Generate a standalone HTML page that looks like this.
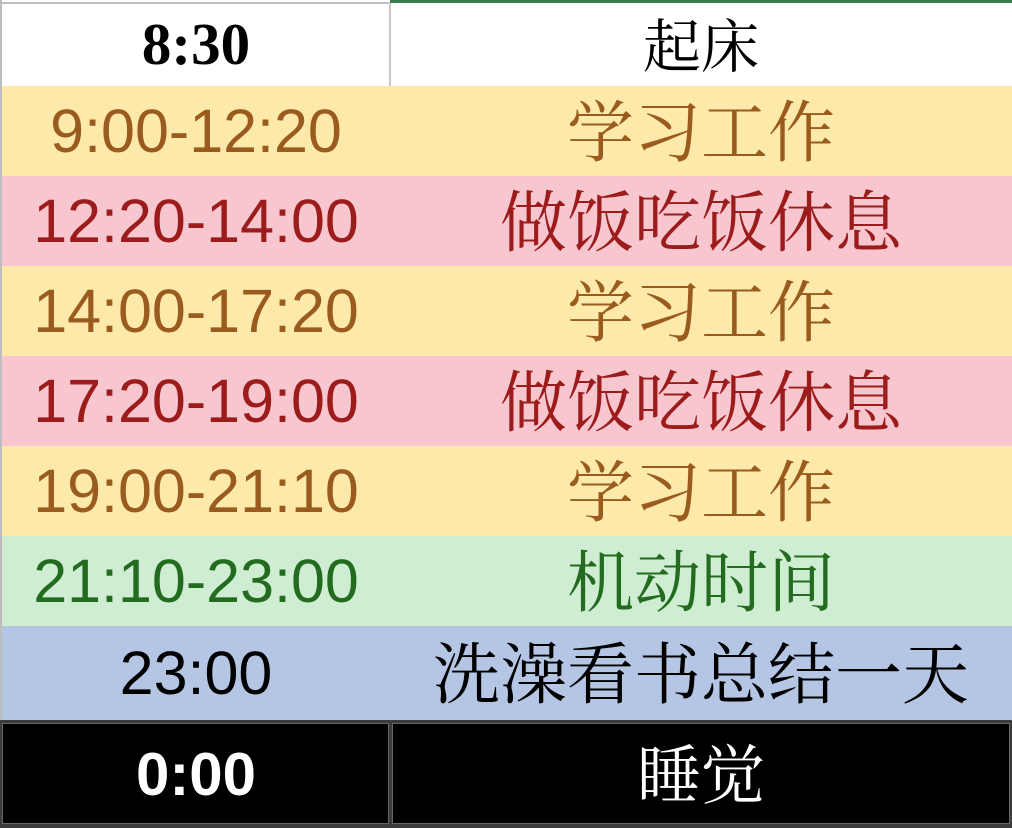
<!DOCTYPE html>
<html><head><meta charset="utf-8"><style>
html,body{margin:0;padding:0}
body{width:1012px;height:828px;position:relative;overflow:hidden;background:#fff}
.r{position:absolute;left:0;width:1012px;}
.t,.c{position:absolute;top:0;height:100%;display:flex;align-items:center;justify-content:center;white-space:nowrap}
.t{left:2px;width:388px;font-family:"Liberation Sans",sans-serif;font-size:61px;}
.c{left:390px;width:622px;font-family:"Liberation Serif","Noto Serif CJK SC",serif;font-size:67px;margin-top:-3px}
.y{background:#fde9a9;color:#9a5b1f}
.p{background:#f7c6ce;color:#9c1c1c}
.g{background:#cfedd2;color:#236b1f}
.b{background:#b5c5e4;color:#000}
.lb{position:absolute;left:0;top:0;width:2px;height:720px;background:#bdbdbd;z-index:5}
</style></head><body>
<div class="lb"></div>
<div class="r" style="top:0;height:86px;background:#fff">
 <div style="position:absolute;left:0;top:2px;width:390px;height:2px;background:#c0c0c0"></div>
 <div style="position:absolute;left:390px;top:0;width:622px;height:3px;background:#3a7a4e"></div>
 <div style="position:absolute;left:389px;top:3px;width:2px;height:83px;background:#c8c8c8"></div>
 <div class="t" style="font-family:'Liberation Serif',serif;font-weight:bold;font-size:59px;top:3px;height:83px">8:30</div>
 <div class="c" style="font-size:58px;top:3px;height:83px">起床</div>
</div>
<div class="r y" style="top:86px;height:90px"><div class="t">9:00-12:20</div><div class="c">学习工作</div></div>
<div class="r p" style="top:176px;height:90px"><div class="t">12:20-14:00</div><div class="c">做饭吃饭休息</div></div>
<div class="r y" style="top:266px;height:90px"><div class="t">14:00-17:20</div><div class="c">学习工作</div></div>
<div class="r p" style="top:356px;height:90px"><div class="t">17:20-19:00</div><div class="c">做饭吃饭休息</div></div>
<div class="r y" style="top:446px;height:90px"><div class="t">19:00-21:10</div><div class="c">学习工作</div></div>
<div class="r g" style="top:536px;height:90px"><div class="t">21:10-23:00</div><div class="c">机动时间</div></div>
<div class="r b" style="top:626px;height:94px"><div class="t">23:00</div><div class="c" style="font-size:67px">洗澡看书总结一天</div></div>
<div class="r" style="top:720px;height:108px;background:#3c3c3c">
 <div style="position:absolute;left:2px;top:3px;width:385px;height:99px;background:#000;border:1px solid #666"></div>
 <div style="position:absolute;left:392px;top:3px;width:616px;height:99px;background:#000;border:1px solid #666"></div>
 <div class="t" style="color:#fff;font-weight:bold;font-size:60px;top:4px;height:100px">0:00</div>
 <div class="c" style="color:#fff;top:4px;height:100px;font-size:64px">睡觉</div>
</div>
</body></html>
